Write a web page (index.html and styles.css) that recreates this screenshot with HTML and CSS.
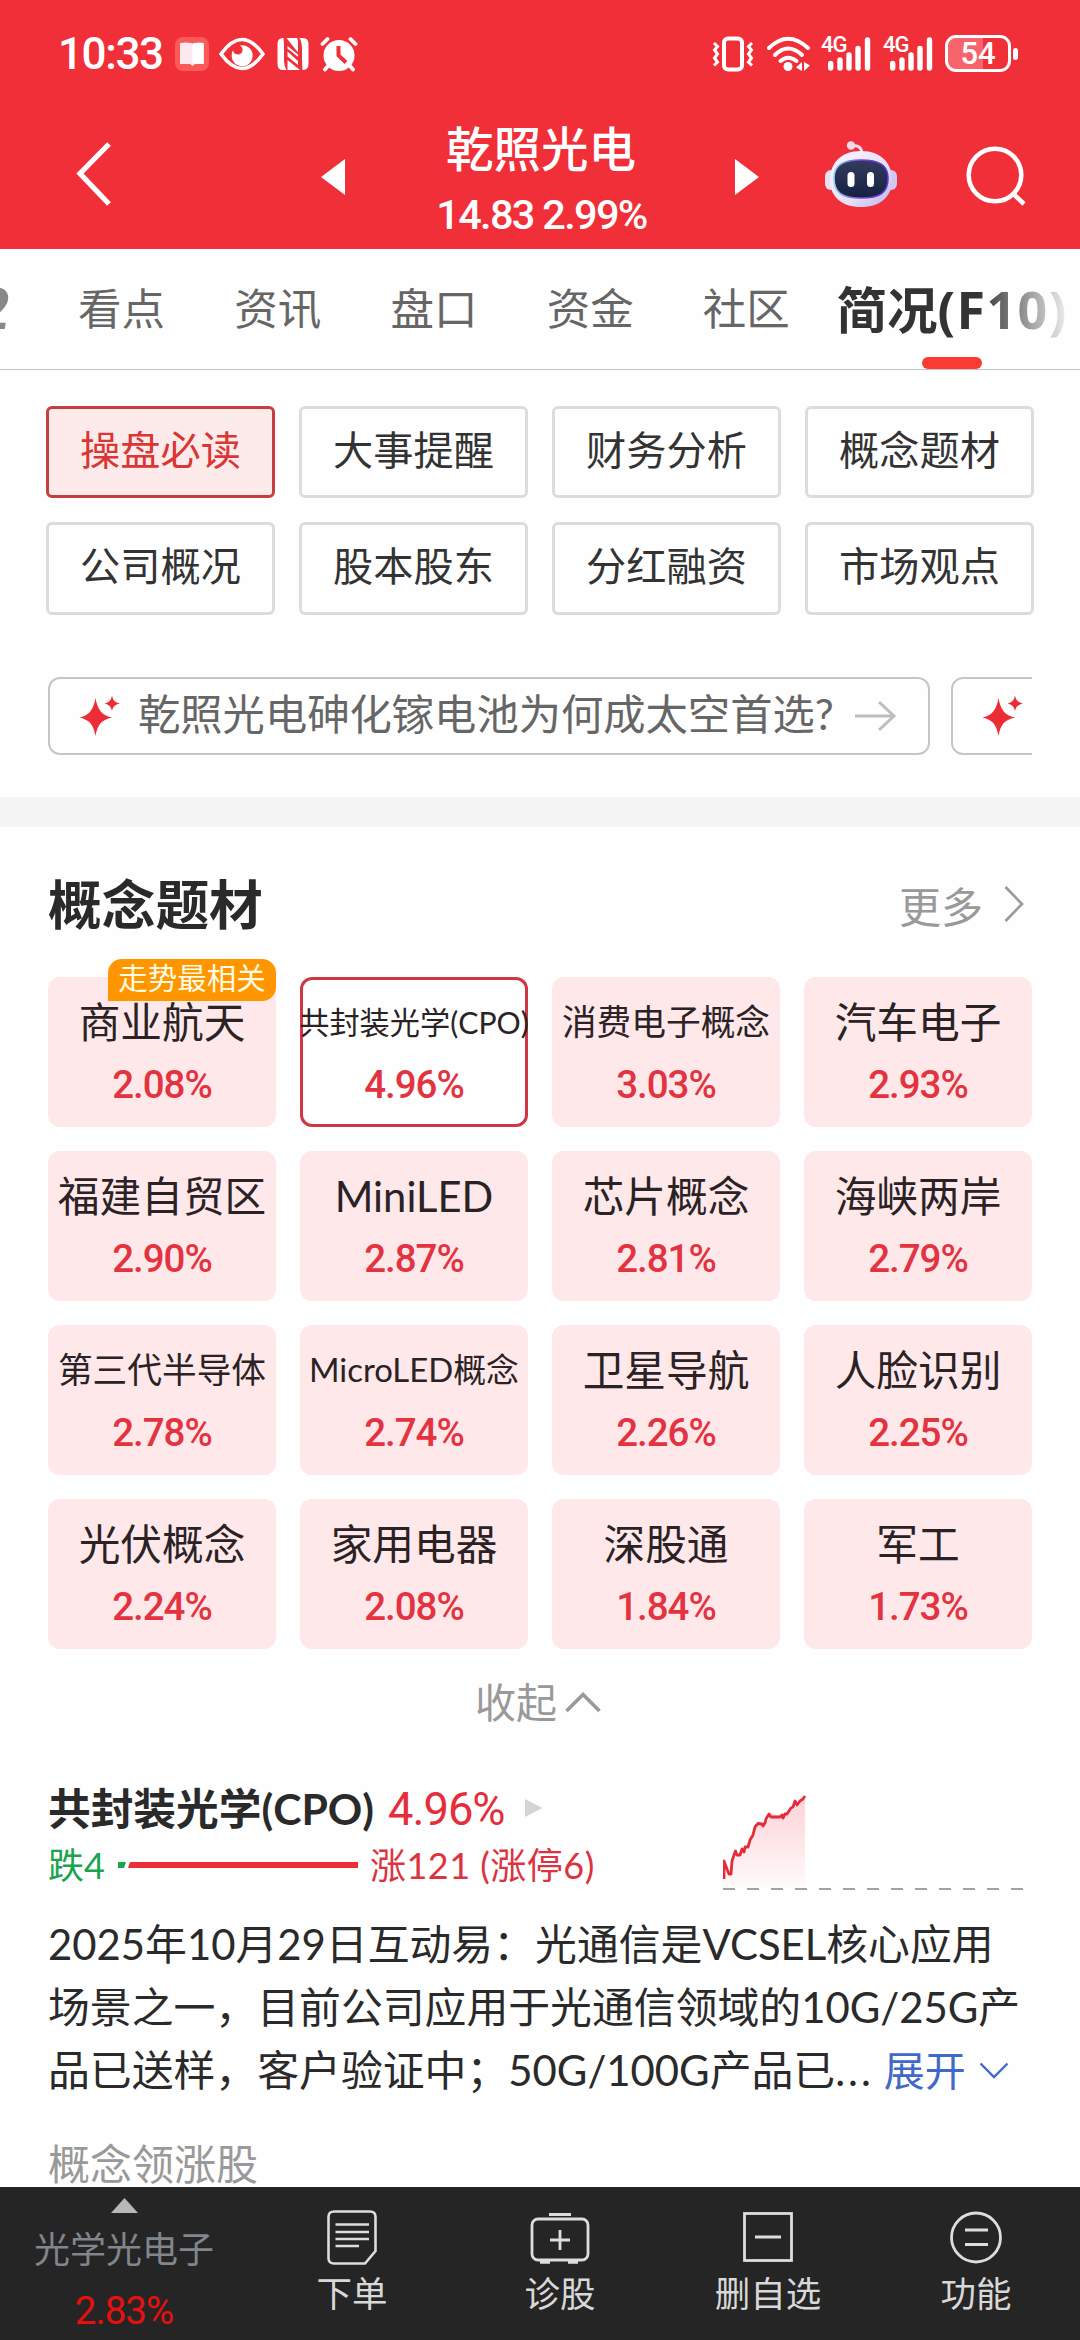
FILE: index.html
```html
<!DOCTYPE html>
<html lang="zh-CN">
<head>
<meta charset="utf-8">
<title>乾照光电 简况(F10)</title>
<link rel="stylesheet" href="styles.css">
</head>
<body>
<svg class="defs" width="0" height="0">
  <defs>
    <symbol id="sparkle" viewBox="0 0 42 42">
      <path fill="#ed2d36" d="M16.500 3C18.500 14 22 20 33 22.500C22 25 18.500 30 16.500 41C14.500 30 11 25 0.500 22.500C11 20 14.500 14 16.500 3Z"/>
      <path fill="#ed2d36" d="M33 0.500C34 5.500 36 7.300 41 8.500C36 9.700 34 11.500 33 16C32 11.500 30 9.700 25.500 8.500C30 7.300 32 5.500 33 0.500Z"/>
    </symbol>
  </defs>
</svg>

<header class="top">
  <div class="status">
    <span class="clock">10:33</span>
    <svg class="s-book" width="34" height="34" viewBox="0 0 34 34"><rect width="34" height="34" rx="8" fill="#fa5a58"/><path d="M5 6q6-1 11 0q1 0 1.500 1q.5-1 1.500-1q5-1 10 0v21h-9l-2.500 2l-2.500-2h-10z" fill="#ffe9f0"/><path d="M17.300 7v21l1.700-1.500h9V6h-9z" fill="#fff"/></svg>
    <svg class="s-eye" width="46" height="34" viewBox="0 0 46 34"><path d="M2 17Q23-12 44 17Q23 46 2 17Z" fill="none" stroke="#fff" stroke-width="3.600" stroke-linejoin="round"/><path d="M21 8.500A10.500 10.500 0 1 1 12.800 17Q13 15 14 13.200A4.800 4.800 0 1 0 21 8.500Z" fill="#fff"/></svg>
    <svg class="s-nfc" width="32" height="34" viewBox="0 0 32 34"><path d="M6 1Q0.500 1 0.500 7V27Q0.500 33 6 33H9.500Q7 29 7 22V12Q7 5 6.500 1ZM9.500 1L21 15.500V5Q21 2.500 20 1ZM22.500 1Q25 5 25 12V22Q25 29 25.500 33Q31.500 33 31.500 27V7Q31.500 1 26 1ZM10.500 9V33H23L10.500 23V19.500L21 28V24L10.500 14.500V11.500L21 20V17.500Z" fill="#fff"/></svg>
    <svg class="s-alarm" width="38" height="36" viewBox="0 0 38 36"><circle cx="19" cy="19.500" r="15.500" fill="#fff"/><path d="M2.500 8L7.500 3M35.500 8L30.500 3M8 30L5 33.500M30 30L33 33.500" stroke="#fff" stroke-width="3.800" stroke-linecap="round"/><path d="M18.500 10V19.500L26 26.500" stroke="#f02f38" stroke-width="4" fill="none"/></svg>
    <span class="spacer"></span>
    <svg class="s-vib" width="42" height="36" viewBox="0 0 42 36"><rect x="12" y="2.500" width="18" height="31" rx="4" fill="none" stroke="#fff" stroke-width="4"/><path d="M2 7L5.500 10.500L2.500 14L5.500 18L2.500 22L5.500 26L2 29.500M40 7L36.500 10.500L39.500 14L36.500 18L39.500 22L36.500 26L40 29.500" fill="none" stroke="#fff" stroke-width="3"/></svg>
    <svg class="s-wifi" width="46" height="36" viewBox="0 0 46 36"><g fill="none" stroke="#fff" stroke-width="4" stroke-linecap="round"><path d="M3 12Q22-6.500 42 12"/><path d="M9 19Q22 6 36 19"/><path d="M14.500 25Q22 18.500 30.500 25"/></g><circle cx="22" cy="30.500" r="4.500" fill="#fff"/><path d="M36 26V35L30 31.500ZM38 26L44 29.500L38 35Z" fill="#fff"/></svg>
    <span class="cell"><b>4G</b><svg width="44" height="36" viewBox="0 0 44 36"><path d="M2.700 27.500V32M12 24V32M21 19V32M30 12.500V32M39.500 4V32" stroke="#fff" stroke-width="5.400" stroke-linecap="round"/></svg></span>
    <span class="cell"><b>4G</b><svg width="44" height="36" viewBox="0 0 44 36"><path d="M2.700 27.500V32M12 24V32M21 19V32M30 12.500V32M39.500 4V32" stroke="#fff" stroke-width="5.400" stroke-linecap="round"/></svg></span>
    <span class="battery">54</span><i class="nub"></i>
  </div>
  <div class="nav">
    <svg class="back" width="42" height="70" viewBox="0 0 42 70"><path d="M35 5L6 34.500L35 65" fill="none" stroke="#fff" stroke-width="5.200"/></svg>
    <svg class="tri" width="24" height="36" viewBox="0 0 24 36"><path d="M0 18L24 0V36Z" fill="#fff"/></svg>
    <div class="quote"><h1>乾照光电</h1><p>14.83 2.99%</p></div>
    <svg class="tri" width="24" height="36" viewBox="0 0 24 36"><path d="M24 18L0 0V36Z" fill="#fff"/></svg>
    <div class="tools">
      <svg class="robot" width="74" height="68" viewBox="0 0 74 68">
        <defs>
          <linearGradient id="shell" x1="0" y1="0" x2="1" y2="1"><stop offset="0" stop-color="#fbf6ff"/><stop offset=".6" stop-color="#e8e0fa"/><stop offset="1" stop-color="#b9b4ea"/></linearGradient>
          <linearGradient id="rim" x1="0" y1="0" x2="1" y2="0"><stop offset="0" stop-color="#8fd0ee"/><stop offset=".5" stop-color="#7a3fd0"/><stop offset="1" stop-color="#5a35d8"/></linearGradient>
          <linearGradient id="visor" x1="0" y1="0" x2="0" y2="1"><stop offset="0" stop-color="#333c60"/><stop offset="1" stop-color="#16203f"/></linearGradient>
        </defs>
        <path d="M27 6Q37 4 38 13" fill="none" stroke="#f3dcea" stroke-width="3"/>
        <circle cx="27" cy="5.500" r="4.200" fill="#f0dbe8"/>
        <rect x="1" y="30" width="12" height="20" rx="6" fill="#e6e2f6"/>
        <rect x="61" y="30" width="12" height="20" rx="6" fill="#cfc8f2"/>
        <path d="M37 11C58 11 68 24 68 40C68 57 56 67 37 67C18 67 6 57 6 40C6 24 16 11 37 11Z" fill="url(#shell)"/>
        <path d="M37 20C55 20 64 25 64 38C64 53 56 58 37 58C18 58 10 53 10 38C10 25 19 20 37 20Z" fill="url(#visor)" stroke="url(#rim)" stroke-width="1.600"/>
        <rect x="23.500" y="32" width="7" height="15" rx="3.500" fill="#fff"/>
        <rect x="43" y="32" width="7" height="15" rx="3.500" fill="#fff"/>
      </svg>
      <svg class="search" width="62" height="62" viewBox="0 0 62 62"><circle cx="30" cy="30" r="26.300" fill="none" stroke="#fff" stroke-width="4.500"/><path d="M48.500 49L59 59" stroke="#fff" stroke-width="4.500"/></svg>
    </div>
  </div>
</header>

<nav class="tabs">
  <span class="tab cut">2</span>
  <span class="tab">看点</span>
  <span class="tab">资讯</span>
  <span class="tab">盘口</span>
  <span class="tab">资金</span>
  <span class="tab">社区</span>
  <span class="tab active">简况<span class="f10">(F10)</span></span>
</nav>

<main class="page">
  <section class="menu">
    <a class="btn on">操盘必读</a><a class="btn">大事提醒</a><a class="btn">财务分析</a><a class="btn">概念题材</a>
    <a class="btn">公司概况</a><a class="btn">股本股东</a><a class="btn">分红融资</a><a class="btn">市场观点</a>
  </section>

  <section class="asks">
    <div class="ask"><svg class="spark" width="42" height="42"><use href="#sparkle"/></svg><span>乾照光电砷化镓电池为何成太空首选?</span><svg width="42" height="32" viewBox="0 0 42 32"><path d="M0 16H39M24 2L39 16L24 30" fill="none" stroke="#bdbdbd" stroke-width="3"/></svg></div>
    <div class="ask next"><svg class="spark" width="42" height="42"><use href="#sparkle"/></svg></div>
  </section>

  <div class="band"></div>

  <section class="concepts">
    <div class="head"><h2>概念题材</h2><a class="more">更多<svg width="22" height="38" viewBox="0 0 22 38"><path d="M2.500 2L19 19L2.500 36" fill="none" stroke="#999" stroke-width="2.600"/></svg></a></div>
    <div class="tiles">
      <div class="tile"><em>走势最相关</em><b>商业航天</b><i>2.08%</i></div>
      <div class="tile sel"><b class="xs">共封装光学(CPO)</b><i>4.96%</i></div>
      <div class="tile"><b class="sm">消费电子概念</b><i>3.03%</i></div>
      <div class="tile"><b>汽车电子</b><i>2.93%</i></div>
      <div class="tile"><b>福建自贸区</b><i>2.90%</i></div>
      <div class="tile"><b>MiniLED</b><i>2.87%</i></div>
      <div class="tile"><b>芯片概念</b><i>2.81%</i></div>
      <div class="tile"><b>海峡两岸</b><i>2.79%</i></div>
      <div class="tile"><b class="sm">第三代半导体</b><i>2.78%</i></div>
      <div class="tile"><b class="mid">MicroLED概念</b><i>2.74%</i></div>
      <div class="tile"><b>卫星导航</b><i>2.26%</i></div>
      <div class="tile"><b>人脸识别</b><i>2.25%</i></div>
      <div class="tile"><b>光伏概念</b><i>2.24%</i></div>
      <div class="tile"><b>家用电器</b><i>2.08%</i></div>
      <div class="tile"><b>深股通</b><i>1.84%</i></div>
      <div class="tile"><b>军工</b><i>1.73%</i></div>
    </div>
    <a class="fold">收起<svg width="36" height="22" viewBox="0 0 36 22"><path d="M1.500 20L18 3.500L34.500 20" fill="none" stroke="#999" stroke-width="3.600"/></svg></a>
  </section>

  <section class="detail">
    <div class="summary">
      <div class="info">
        <h3>共封装光学(CPO)<span>4.96%</span><svg width="18" height="20" viewBox="0 0 18 20"><path d="M0 1L17.500 10L0 19Z" fill="#d4d4d4"/></svg></h3>
        <div class="breadth"><span class="down">跌4</span><svg width="240" height="6" viewBox="0 0 240 6"><path d="M0 0H8L6 6H0Z" fill="#19a54f"/><path d="M12 0H240V6H10Z" fill="#ed2d38"/></svg><span class="up">涨121 (涨停6)</span></div>
      </div>
      <svg class="chart" width="304" height="98" viewBox="0 0 304 98">
        <defs><linearGradient id="area" x1="0" y1="0" x2="0" y2="1"><stop offset="0" stop-color="#fdd3d8"/><stop offset="1" stop-color="#fffafa"/></linearGradient></defs>
        <path d="M1 78V66L6 78L11 58L17 60L21 54L26 51L32 32L35 28L44 27L48 19L62 21L72 13L82 4V92H1Z" fill="url(#area)"/>
        <path d="M1 84V66L4 74L6 79H8L9 66L11 60L12.500 56L14 60H17L19 54L21 57L22 52L25 52L27 45L30 40L32 32L35 28.500L39 29L40 31L42 28L43 24L46 19L48 22H57L59 20L60 23L62 19H64L68 13L70 12L72 6L74 10L77 6L80 4L82 1" fill="none" stroke="#e52b3a" stroke-width="2.800" stroke-linejoin="round"/>
        <path d="M0 94H301" stroke="#a3a3a3" stroke-width="2" stroke-dasharray="12 12"/>
      </svg>
    </div>
    <div class="text"><p>2025年10月29日互动易：光通信是VCSEL核心应用</p><p>场景之一，目前公司应用于光通信领域的10G/25G产</p><p>品已送样，客户验证中；50G/100G产品已<span class="dots">...</span><a>展开<svg width="30" height="18" viewBox="0 0 30 18"><path d="M1.500 1.500L15 15L28.500 1.500" fill="none" stroke="#4169c8" stroke-width="2.400"/></svg></a></p></div>
    <h4>概念领涨股</h4>
  </section>
</main>

<footer class="dock">
  <div class="board"><svg width="27" height="15" viewBox="0 0 27 15"><path d="M13.500 0L27 15H0Z" fill="#b8b8b8"/></svg><span>光学光电子</span><i>2.83%</i></div>
  <div class="act"><svg width="52" height="58" viewBox="0 0 52 58"><path d="M7 2.500H44Q49.500 2.500 49.500 8V42L39 54.500H8Q2.500 54.500 2.500 49V8Q2.500 2.500 8 2.500ZM9.500 15.500H43M9.500 23H43M9.500 30H43M9.500 37H33" fill="none" stroke="#ddd" stroke-width="2.600"/></svg><span>下单</span></div>
  <div class="act"><svg width="60" height="58" viewBox="0 0 60 58"><rect x="2" y="10" width="56" height="41" rx="6" fill="none" stroke="#ddd" stroke-width="2.800"/><path d="M19 5.500H41M30 21V41M20 31H40" stroke="#ddd" stroke-width="2.800" fill="none"/><path d="M10 52.500H20M38 52.500H48" stroke="#ddd" stroke-width="4.500"/></svg><span>诊股</span></div>
  <div class="act"><svg width="52" height="58" viewBox="0 0 52 58"><rect x="2.500" y="4.500" width="47" height="47" fill="none" stroke="#ddd" stroke-width="2.800"/><path d="M13 28H39" stroke="#ddd" stroke-width="3"/></svg><span>删自选</span></div>
  <div class="act"><svg width="54" height="58" viewBox="0 0 54 58"><circle cx="27" cy="28.500" r="24.500" fill="none" stroke="#ddd" stroke-width="2.800"/><path d="M16 21H39M16 35.500H39" stroke="#ddd" stroke-width="3"/></svg><span>功能</span></div>
</footer>
</body>
</html>
```

FILE: styles.css
```css
* { box-sizing: border-box; margin: 0; padding: 0; }
body {
  width: 1080px;
  height: 2340px;
  overflow: hidden;
  display: flex;
  flex-direction: column;
  background: #fefefe;
  color: #2a2a2a;
  font-family: Lato, "Noto Sans CJK SC", sans-serif;
}
svg { display: block; flex: none; }
.defs { position: absolute; }
i, em { font-style: normal; }

/* header */
.top { height: 249px; background: #f12f38; color: #fff; flex: none; }
.status { height: 107px; display: flex; align-items: center; padding: 0 62px 0 58px; }
.clock { font: 500 44px/60px Roboto, sans-serif; letter-spacing: -1.4px; width: 117px; white-space: nowrap; }
.s-eye { margin-left: 10px; }
.s-nfc { margin-left: 12px; }
.s-alarm { margin-left: 11px; }
.spacer { flex: 1; }
.s-wifi { margin-left: 12px; margin-right: 9px; }
.cell { position: relative; width: 62px; padding-left: 7px; flex: none; }
.cell b { position: absolute; left: 0; top: 0; font: 500 22px/18px Roboto, sans-serif; letter-spacing: -1px; }
.battery {
  width: 66px; height: 37px; border: 3px solid #fff; border-radius: 11px;
  background: linear-gradient(90deg, #f8646c 58%, transparent 58%);
  font: 500 31px/31px Roboto, sans-serif; text-align: center; flex: none;
}
.nub { width: 5px; height: 12px; margin-left: 2px; border-radius: 3px; background: #fff; flex: none; }
.nav { display: grid; grid-template-columns: 321px 24px 390px 24px 321px; }
.back { margin: 32px 0 0 74px; }
.tri { margin-top: 52px; }
.quote { text-align: center; }
.quote h1 { font-size: 47.500px; font-weight: 500; line-height: 60px; margin-top: 12px; padding-left: 2px; }
.quote p { font: 500 41.500px/46px Roboto, sans-serif; letter-spacing: -1.7px; margin-top: 13px; padding-left: 3px; }
.tools { display: flex; padding-left: 65px; }
.robot { margin-top: 33px; }
.search { margin: 38px 0 0 67px; }

/* tabs */
.tabs { position: relative; height: 121px; display: flex; border-bottom: 1px solid #c4c4c4; flex: none; overflow: hidden; }
.tabs::after { content: ""; position: absolute; right: 0; top: 0; width: 102px; height: 106px; background: linear-gradient(90deg, rgba(254,254,254,0), #fefefe 95%); }
.tab { width: 156.200px; text-align: center; font-size: 43.500px; line-height: 119px; color: #666; flex: none; }
.cut { width: 43.500px; display: flex; justify-content: flex-end; padding-right: 34px; font: italic 700 58px/120px Roboto, sans-serif; color: #888; }
.active { position: relative; width: 232px; margin-left: 10px; font-weight: 700; font-size: 50.500px; color: #333; white-space: nowrap; text-align: left; padding-left: 2px; }
.f10 { font-family: "Noto Sans", sans-serif; font-size: 52px; letter-spacing: 1.400px; }
.active::after { content: ""; position: absolute; left: 88px; top: 108px; width: 60px; height: 12px; border-radius: 6px; background: #fa3b32; }

/* section menu */
.page { flex: 1; min-height: 0; overflow: hidden; }
.menu { display: grid; grid-template-columns: repeat(4, 229px); gap: 24px; padding: 36px 46px 0; }
.btn { height: 92px; border: 3px solid #dcdcdc; border-radius: 6px; text-align: center; font-size: 40.200px; line-height: 81px; color: #333; }
.btn.on { color: #d93634; border-color: #c83e40; background: #fdeaea; }
.btn:nth-child(n+5) { height: 93px; }

/* suggested questions */
.asks { display: flex; gap: 21px; margin: 62px 48px 0; overflow: hidden; }
.ask { flex: none; width: 882px; height: 78px; border: 2px solid #c6c6c6; border-radius: 12px; display: flex; align-items: center; padding-left: 29px; font-size: 42.300px; line-height: 74px; color: #666; }
.ask span { width: 717px; margin-left: 17px; margin-top: -4px; white-space: nowrap; }
.band { height: 30px; margin-top: 42px; background: #f4f4f4; }

/* concepts */
.concepts { padding: 0 48px; }
.head { height: 150px; display: flex; justify-content: space-between; padding-top: 47px; }
.head h2 { font-size: 53.700px; font-weight: 700; line-height: 60px; }
.more { display: flex; align-items: center; gap: 20px; height: 60px; padding-right: 7px; font-size: 42px; color: #999; }
.tiles { display: grid; grid-template-columns: repeat(4, 228px); gap: 24px; }
.tile { position: relative; height: 150px; border-radius: 12px; background: #fee8ea; display: flex; flex-direction: column; align-items: center; padding-top: 15px; }
.tile b { font-weight: 400; font-size: 41.700px; line-height: 60px; white-space: nowrap; color: #2a2224; }
.tile .sm { font-size: 34.700px; }
.tile .mid { font-size: 32.900px; }
.tile .xs { font-size: 30.200px; }
.tile i { font: 500 38.500px/50px Roboto, sans-serif; letter-spacing: -1px; color: #e43340; margin-top: 8px; }
.tile em { position: absolute; right: 0; top: -18px; width: 168px; height: 42px; border-radius: 14px 14px 14px 0; background: #ff9600; color: #fffbe2; font-size: 29.500px; line-height: 38px; text-align: center; white-space: nowrap; }
.sel { background: none; box-shadow: inset 0 0 0 3px #cf3745; }
.fold { display: flex; justify-content: center; align-items: center; gap: 8px; height: 60px; margin-top: 21px; padding-right: 4px; font-size: 41px; color: #999; }
.fold svg { margin-top: 3px; }

/* selected concept */
.detail { padding: 47px 48px 0; }
.summary { display: flex; justify-content: space-between; height: 130px; }
.chart { margin: 18px 5px 0 0; }
.info h3 { display: flex; align-items: center; height: 58px; font-size: 42.700px; font-weight: 700; }
.info h3 span { font: 400 45.300px/58px Roboto, sans-serif; letter-spacing: -1px; color: #e62e3b; margin: 7px 20px 0 14px; }
.info h3 svg { margin-top: 4px; }
.breadth { display: flex; align-items: center; height: 48px; margin-top: 4px; font-size: 36px; color: #dc3340; white-space: nowrap; }
.breadth svg { margin: 3px 12px 0 13px; }
.up { letter-spacing: .5px; }
.down { color: #19a54f; }
.text { margin-top: 6px; font-size: 41.850px; line-height: 63px; }
.text p { display: flex; white-space: nowrap; }
.dots { letter-spacing: 3px; margin-right: 10px; }
.text a { display: flex; align-items: center; gap: 13px; color: #4169c8; font-size: 41px; }
.detail h4 { font-weight: 400; font-size: 42px; line-height: 60px; color: #999; margin-top: 32px; }

/* dock */
.dock { height: 153px; display: grid; grid-template-columns: 248px repeat(4, 208px); background: #252525; color: #d8d8d8; flex: none; }
.board { display: flex; flex-direction: column; align-items: center; padding: 11px 0 0; }
.board span { font-size: 36px; line-height: 50px; margin-top: 11px; color: #80868b; }
.board i { font: 400 38.500px/44px Roboto, sans-serif; letter-spacing: -1px; margin-top: 15px; color: #e80f0f; }
.act { display: flex; flex-direction: column; align-items: center; padding-top: 22px; font-size: 35.500px; line-height: 50px; }
.act span { margin-top: 2px; }
```
